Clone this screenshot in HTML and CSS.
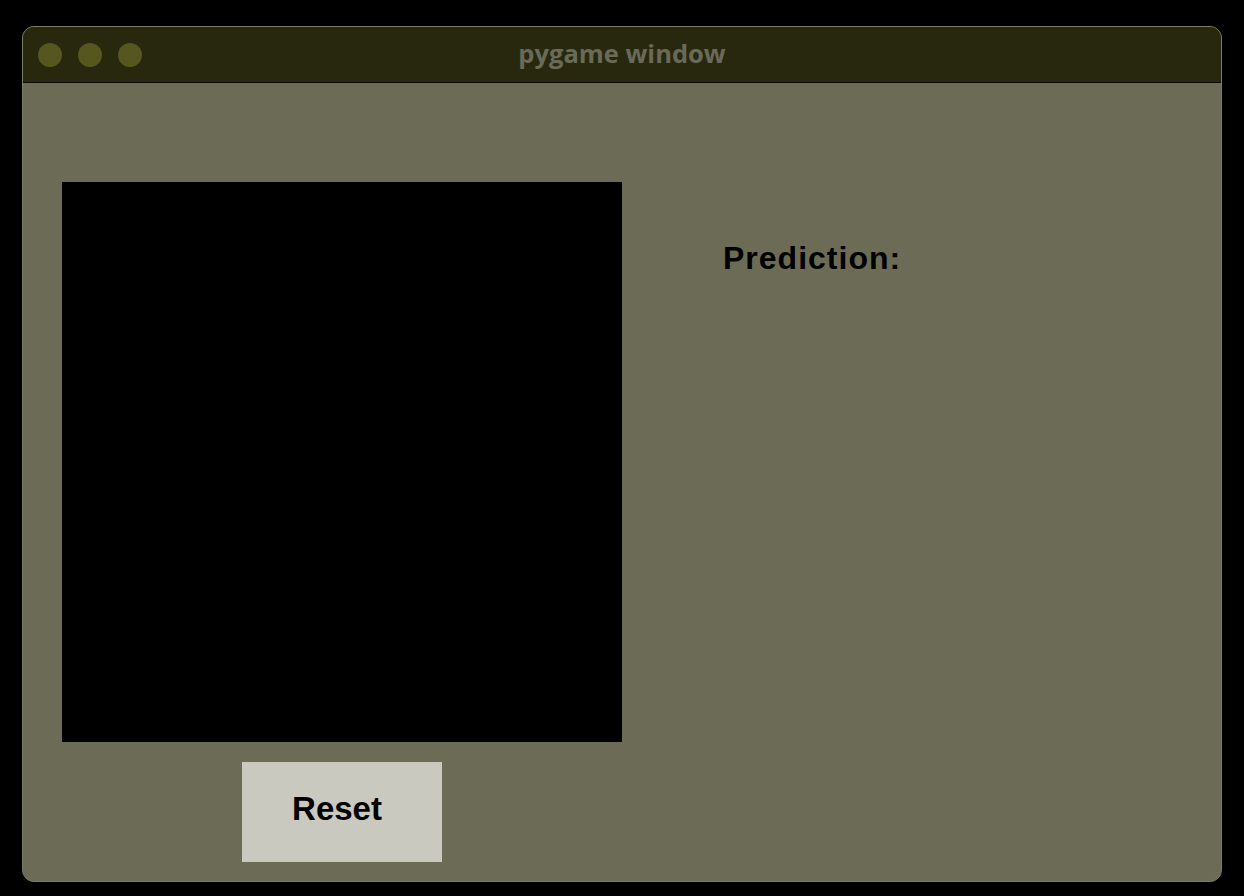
FILE: index.html
```html
<!DOCTYPE html>
<html>
<head>
<meta charset="utf-8">
<link rel="stylesheet" href="styles.css">
</head>
<body>
<div class="window">
  <div class="titlebar">
    <div class="lights">
      <span class="light"></span><span class="light"></span><span class="light"></span>
    </div>
    <div class="title">pygame window</div>
  </div>
  <div class="content">
    <div class="left">
      <div class="canvas"></div>
      <div class="reset">Reset</div>
    </div>
    <div class="right">
      <div class="prediction">Prediction:</div>
    </div>
  </div>
</div>
</body>
</html>
```
FILE: styles.css
```css
html, body {
  margin: 0;
  padding: 0;
  background: #000;
  width: 1244px;
  height: 896px;
  overflow: hidden;
  font-family: "Liberation Sans", Arial, sans-serif;
}
.window {
  margin: 26px 0 0 22px;
  width: 1200px;
  height: 856px;
  border-radius: 12px;
  overflow: hidden;
  box-sizing: border-box;
  border: 1px solid #7c7c5e;
  display: flex;
  flex-direction: column;
  background: #6c6c56;
}
.titlebar {
  height: 55px;
  background: #28280f;
  border-bottom: 1px solid #0a0a04;
  display: flex;
  align-items: center;
  position: relative;
}
.lights {
  display: flex;
  gap: 16px;
  padding-left: 15px;
}
.light {
  width: 24px;
  height: 24px;
  border-radius: 50%;
  background: #56561f;
}
.title {
  position: absolute;
  left: 0;
  right: 0;
  top: 0;
  bottom: 0;
  display: flex;
  align-items: center;
  justify-content: center;
  color: #6a6a58;
  font-family: "Open Sans", "Liberation Sans", sans-serif;
  font-weight: 700;
  font-size: 25.5px;
  padding-bottom: 4px;
}
.content {
  flex: 1;
  display: flex;
  padding: 99px 0 0 39px;
}
.left {
  display: flex;
  flex-direction: column;
  align-items: center;
  gap: 20px;
  width: 560px;
}
.canvas {
  width: 560px;
  height: 560px;
  background: #000;
}
.reset {
  width: 200px;
  height: 100px;
  background: #c9c9bf;
  display: flex;
  align-items: center;
  justify-content: center;
  font-weight: 700;
  font-size: 33px;
  color: #000;
  padding: 0 10px 6px 0;
  box-sizing: border-box;
}
.right {
  padding: 58px 0 0 101px;
}
.prediction {
  font-weight: 700;
  font-size: 32px;
  letter-spacing: 1px;
  color: #000;
}
```
